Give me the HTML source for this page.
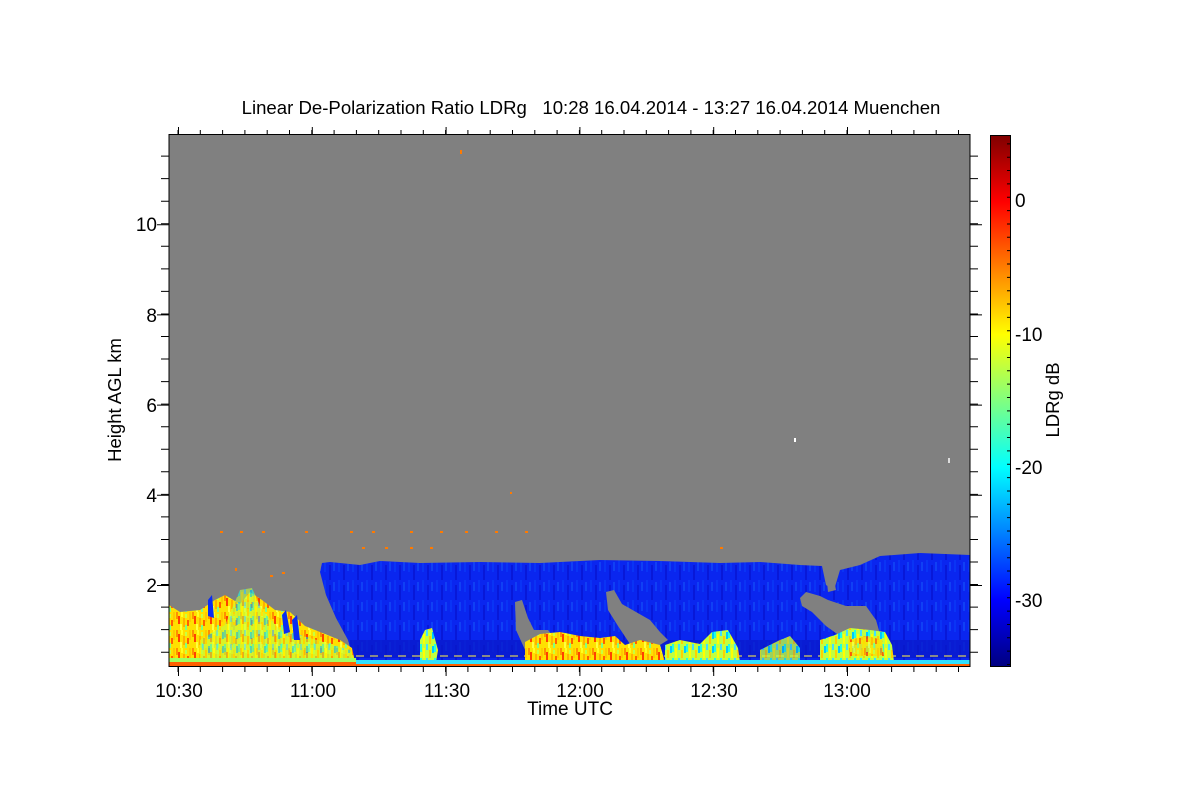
<!DOCTYPE html>
<html><head><meta charset="utf-8"><style>
html,body{margin:0;padding:0;background:#fff;}
svg{display:block;font-family:"Liberation Sans",Arial,sans-serif;}
</style></head><body>
<svg width="1200" height="800" viewBox="0 0 1200 800" xmlns="http://www.w3.org/2000/svg">
<defs>
<linearGradient id="jet" x1="0" y1="0" x2="0" y2="1">
<stop offset="0" stop-color="#800000"/>
<stop offset="0.125" stop-color="#ff0000"/>
<stop offset="0.375" stop-color="#ffff00"/>
<stop offset="0.5" stop-color="#80ff80"/>
<stop offset="0.625" stop-color="#00ffff"/>
<stop offset="0.875" stop-color="#0000ff"/>
<stop offset="1" stop-color="#000080"/>
</linearGradient>
<pattern id="bluep" width="14" height="20" patternUnits="userSpaceOnUse">
<rect width="14" height="20" fill="#0a26ef"/>
<rect x="2" y="0" width="2" height="12" fill="#0a34f5"/>
<rect x="7" y="5" width="2" height="15" fill="#0818d8"/>
<rect x="11" y="2" width="2" height="9" fill="#1040f5"/>
</pattern>
<pattern id="warm" width="16" height="18" patternUnits="userSpaceOnUse">
<rect width="16" height="18" fill="#ffe000"/>
<rect x="0" y="0" width="2" height="7" fill="#ff9000"/>
<rect x="2" y="4" width="2" height="8" fill="#ff4000"/>
<rect x="5" y="0" width="2" height="5" fill="#ffff20"/>
<rect x="7" y="6" width="2" height="9" fill="#ffb000"/>
<rect x="9" y="2" width="2" height="4" fill="#c8ff40"/>
<rect x="11" y="8" width="2" height="6" fill="#ff6000"/>
<rect x="13" y="0" width="2" height="10" fill="#ffc800"/>
<rect x="4" y="12" width="2" height="6" fill="#ffff40"/>
<rect x="9" y="13" width="2" height="5" fill="#80ff80"/>
</pattern>
<pattern id="cool" width="14" height="14" patternUnits="userSpaceOnUse">
<rect width="14" height="14" fill="#c0ff40"/>
<rect x="0" y="0" width="2" height="8" fill="#20ffe0"/>
<rect x="3" y="4" width="2" height="10" fill="#ffff00"/>
<rect x="6" y="0" width="2" height="6" fill="#40e0ff"/>
<rect x="9" y="6" width="2" height="8" fill="#ffd000"/>
<rect x="12" y="2" width="2" height="7" fill="#00c8ff"/>
</pattern>
</defs>

<text x="591" y="114" font-size="18.6" text-anchor="middle" fill="#000">Linear De-Polarization Ratio LDRg&#160;&#160;&#160;10:28 16.04.2014 - 13:27 16.04.2014 Muenchen</text>

<rect x="169" y="135" width="801" height="531" fill="#808080"/>

<path d="M320,572 L322,563 L330,562 L360,565 L380,561 L420,563 L480,562 L540,563 L600,560 L660,561 L720,563 L760,562 L800,565 L822,566 L826,585 L834,590 L840,570 L860,565 L880,556 L920,553 L970,555 L970,666 L355,666 L348,640 L336,618 L326,595 Z" fill="url(#bluep)"/>
<rect x="350" y="640" width="620" height="18" fill="#0818c8" opacity="0.7"/>
<path d="M515,602 L522,600 L528,618 L534,630 L548,630 L556,640 L545,650 L526,652 L516,630 Z" fill="#808080"/>
<path d="M606,592 L614,590 L622,604 L636,612 L650,620 L660,632 L668,640 L655,648 L630,644 L618,626 L608,610 Z" fill="#808080"/>
<path d="M800,598 L806,592 L820,596 L828,600 L846,606 L866,606 L876,620 L880,634 L860,640 L840,636 L826,626 L812,612 L802,606 Z" fill="#808080"/>
<path d="M826,572 L832,570 L836,590 L828,592 Z" fill="#808080"/>
<line x1="356" y1="656" x2="970" y2="656" stroke="#8a8a8a" stroke-width="2" stroke-dasharray="8 6"/>

<path d="M169,605 L180,612 L200,610 L215,600 L225,595 L240,604 L250,592 L262,600 L275,610 L290,612 L305,626 L320,632 L340,640 L352,648 L356,666 L169,666 Z" fill="url(#warm)"/>
<path d="M200,640 L225,625 L240,590 L252,588 L262,610 L280,630 L300,635 L350,650 L356,664 L200,664 Z" fill="url(#cool)" opacity="0.6"/>
<path d="M208,600 L212,595 L214,618 L208,616 Z" fill="#0a2cf2"/>
<path d="M282,615 L286,610 L290,632 L284,634 Z" fill="#0a2cf2"/>
<path d="M292,620 L297,615 L300,640 L294,640 Z" fill="#0a2cf2"/>
<path d="M525,642 L540,634 L560,632 L580,636 L600,638 L615,636 L625,645 L640,640 L660,645 L665,662 L525,662 Z" fill="url(#warm)"/>
<path d="M665,645 L680,640 L700,644 L712,632 L728,630 L738,648 L740,662 L665,662 Z" fill="url(#cool)"/>
<path d="M420,640 L425,630 L432,628 L438,650 L436,662 L420,662 Z" fill="url(#cool)"/>
<path d="M760,650 L780,640 L790,636 L800,648 L800,662 L760,662 Z" fill="url(#cool)" opacity="0.8"/>
<path d="M820,640 L835,635 L850,628 L870,630 L885,632 L892,645 L894,662 L820,662 Z" fill="url(#cool)"/>
<path d="M848,640 L868,636 L882,640 L884,656 L850,656 Z" fill="url(#warm)" opacity="0.8"/>
<rect x="169" y="662" width="801" height="4" fill="#ff6000"/>
<rect x="356" y="660" width="614" height="4" fill="#30e0ff"/>
<rect x="169" y="658" width="187" height="4" fill="#a0ff60"/>
<g fill="#ff7a00">
<rect x="220" y="531" width="3" height="2"/><rect x="240" y="531" width="3" height="2"/><rect x="262" y="531" width="3" height="2"/><rect x="305" y="531" width="3" height="2"/><rect x="350" y="531" width="3" height="2"/><rect x="372" y="531" width="3" height="2"/><rect x="410" y="531" width="3" height="2"/><rect x="440" y="531" width="3" height="2"/><rect x="465" y="531" width="3" height="2"/><rect x="495" y="531" width="3" height="2"/><rect x="525" y="531" width="3" height="2"/><rect x="720" y="547" width="3" height="2"/><rect x="460" y="150" width="2" height="4"/><rect x="510" y="492" width="2" height="2"/>
<rect x="362" y="547" width="3" height="2"/><rect x="385" y="547" width="3" height="2"/><rect x="410" y="547" width="3" height="2"/><rect x="430" y="547" width="3" height="2"/><rect x="270" y="575" width="3" height="2"/><rect x="282" y="572" width="3" height="2"/><rect x="235" y="568" width="2" height="3"/>
</g>
<rect x="794" y="438" width="2" height="4" fill="#fff"/>
<rect x="948" y="458" width="2" height="5" fill="#ddd"/>

<rect x="169" y="134.5" width="801" height="532" fill="none" stroke="#000" stroke-width="1"/>
<line x1="169" y1="132" x2="970" y2="132" stroke="#000" stroke-width="4" stroke-dasharray="1 21.3" stroke-dashoffset="-8.5"/>
<line x1="169" y1="669.5" x2="970" y2="669.5" stroke="#000" stroke-width="5" stroke-dasharray="1 21.3" stroke-dashoffset="-8.5"/>
<path d="M178.5,134v-7M312.3,134v-7M446.1,134v-7M579.9,134v-7M713.7,134v-7M847.5,134v-7M178.5,667v9M312.3,667v9M446.1,667v9M579.9,667v9M713.7,667v9M847.5,667v9" stroke="#000" stroke-width="1"/>
<line x1="165" y1="667" x2="165" y2="136" stroke="#000" stroke-width="8" stroke-dasharray="1 21.55" stroke-dashoffset="8.25"/>
<line x1="974" y1="667" x2="974" y2="136" stroke="#000" stroke-width="8" stroke-dasharray="1 21.55" stroke-dashoffset="8.25"/>
<path d="M169,585.5h-12M169,495.3h-12M169,405.1h-12M169,314.9h-12M169,224.7h-12M970,585.5h12M970,495.3h12M970,405.1h12M970,314.9h12M970,224.7h12" stroke="#000" stroke-width="1"/>

<g font-size="19" text-anchor="end" fill="#000">
<text x="157" y="592">2</text><text x="157" y="502">4</text><text x="157" y="412">6</text><text x="157" y="322">8</text><text x="157" y="231">10</text>
</g>
<text transform="translate(121,400) rotate(-90)" font-size="18.5" text-anchor="middle">Height AGL km</text>
<g font-size="19" text-anchor="middle" fill="#000">
<text x="179" y="697">10:30</text><text x="313" y="697">11:00</text><text x="447" y="697">11:30</text><text x="580" y="697">12:00</text><text x="714" y="697">12:30</text><text x="847" y="697">13:00</text>
</g>
<text x="570" y="715" font-size="19" text-anchor="middle">Time UTC</text>

<rect x="990.5" y="135.5" width="20" height="531" fill="url(#jet)" stroke="#000" stroke-width="1"/>
<line x1="1008.5" y1="666" x2="1008.5" y2="136" stroke="#000" stroke-width="3" stroke-dasharray="1 12.35" stroke-dashoffset="-1"/>
<g font-size="19" fill="#000">
<text x="1015" y="207">0</text><text x="1015" y="341">-10</text><text x="1015" y="474">-20</text><text x="1015" y="607">-30</text>
</g>
<text transform="translate(1059,400) rotate(-90)" font-size="18.5" text-anchor="middle">LDRg dB</text>
</svg>
</body></html>
